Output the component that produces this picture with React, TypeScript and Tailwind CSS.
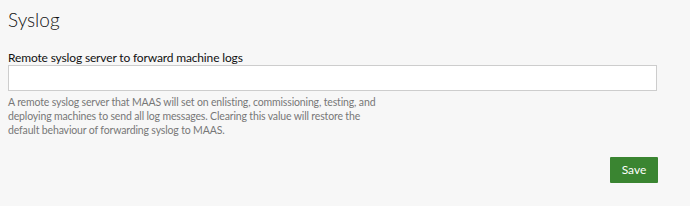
export default function App() {
  return (
    <div
      className="min-h-[206px] w-[690px] bg-[#f7f7f7] px-2 pt-[7px] text-[#111]"
      style={{ fontFamily: 'Lato, "Open Sans", sans-serif' }}
    >
      <h2 className="text-[19px] font-light leading-[26px]">Syslog</h2>

      <div className="mt-[17px]">
        <label className="block text-[12px] leading-[15px] tracking-[-0.15px]">
          Remote syslog server to forward machine logs
        </label>
        <input
          type="text"
          className="block h-[26px] w-[649px] border border-[#cdcdcd] bg-white px-2 text-sm outline-none"
        />
        <p className="mt-[4px] whitespace-nowrap text-[10.5px] leading-[14px] tracking-[-0.15px] text-[#777]">
          A remote syslog server that MAAS will set on enlisting, commissioning, testing, and
          <br />
          deploying machines to send all log messages. Clearing this value will restore the
          <br />
          default behaviour of forwarding syslog to MAAS.
        </p>
      </div>

      <div className="mt-[20px] flex w-[650px] justify-end">
        <button className="h-[26px] w-[48px] rounded-[1px] bg-[#3a8531] text-[12px] text-white">
          Save
        </button>
      </div>
    </div>
  );
}
